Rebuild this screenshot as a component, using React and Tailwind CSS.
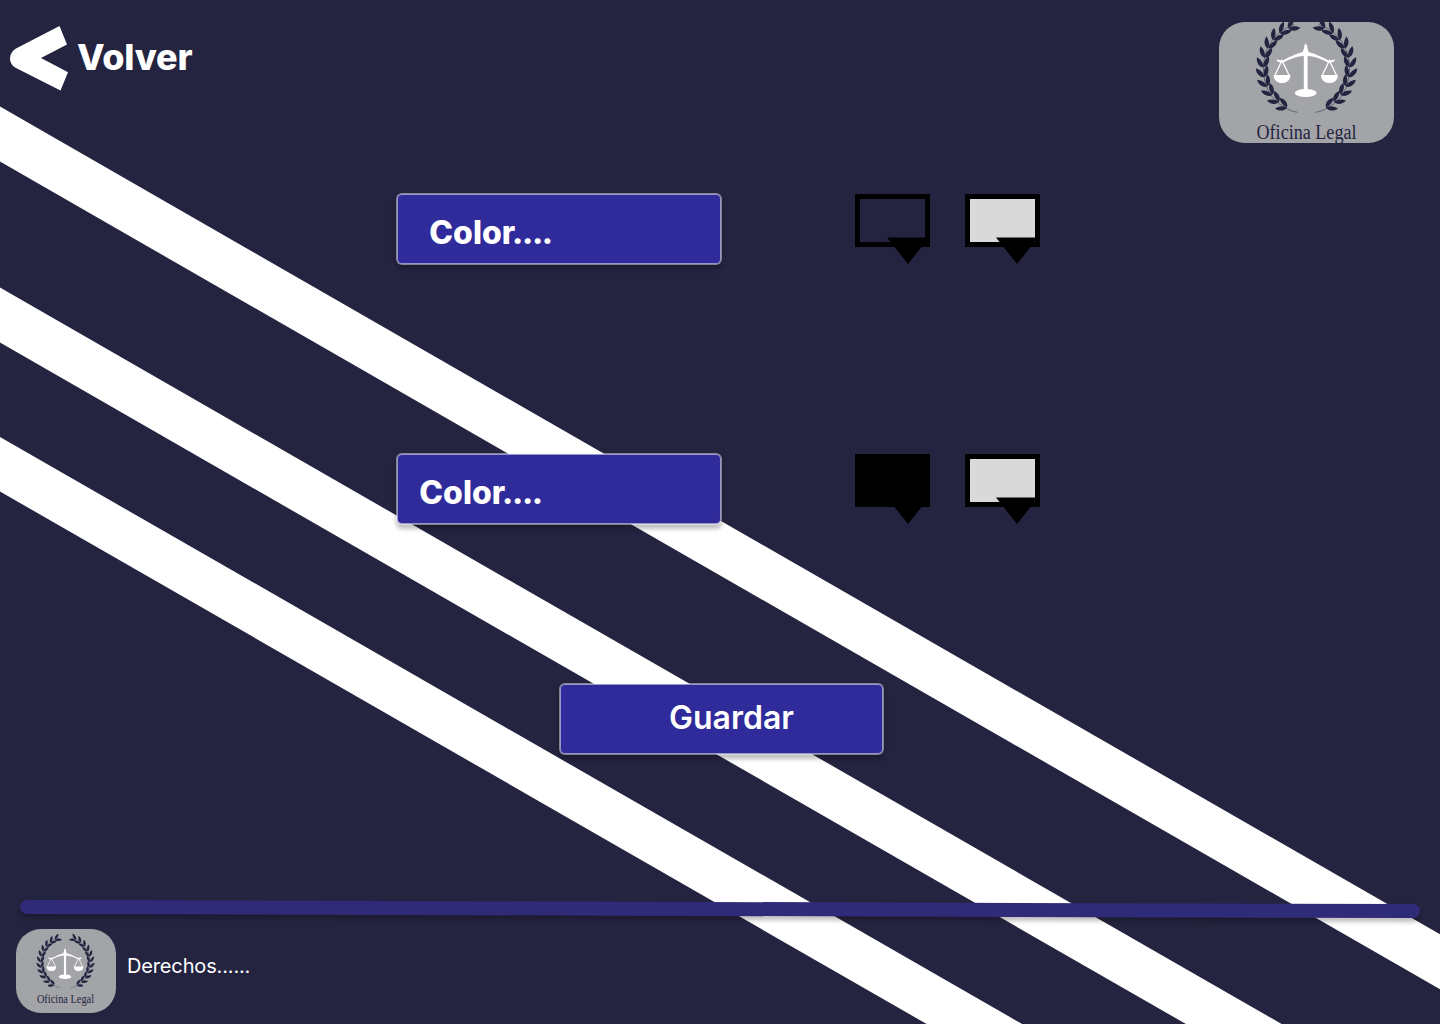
import React from "react";

const RAD = Math.PI / 180;

// Leaf pairs of the left laurel branch, from the stem up to the tip.
const LEAVES = Array.from({ length: 11 }, (_, i) => {
  const a = (-63 + i * 12.8) * RAD;
  const x = -43 * Math.cos(a);
  const y = 48 - 44 * Math.sin(a);
  const heading = Math.atan2(-44 * Math.cos(a), 43 * Math.sin(a)) / RAD;
  return { x, y, heading };
});

function Leaf({ turn, length }) {
  return (
    <path
      transform={`rotate(${turn}) scale(${length})`}
      d="M0 0C.15-.28 .7-.32 1 0C.75 .17 .3 .2 0 0Z"
    />
  );
}

function Branch() {
  return (
    <g fill="#252440">
      <path
        d="M-9 92.3C-14 91.5-18 90-22 87C-36 80-43 66-43 48C-43 30-34 12-12 4.5"
        fill="none"
        stroke="#252440"
        strokeWidth="0.5"
      />
      {LEAVES.map((l, i) => (
        <g key={i} transform={`translate(${l.x} ${l.y}) rotate(${l.heading})`}>
          <Leaf turn={-34} length={12} />
          <g transform="scale(1 -1)">
            <Leaf turn={-24} length={12} />
          </g>
        </g>
      ))}
    </g>
  );
}

function Emblem({ className }) {
  return (
    <svg viewBox="-51.5 0 104 128" className={`overflow-visible ${className}`} role="img" aria-label="Oficina Legal">
      <Branch />
      <g transform="scale(-1 1)">
        <Branch />
      </g>
      <g fill="#fff" transform="translate(-.8 0)">
        <path d="M-1.9 77V36C-10 36.5-17 39.5-23 43L-28 41.8L-29.5 39.5L-23 40.4C-17 37.5-9 33.5-3 32L-1.6 28V26L0 23.3L1.6 26V28L3 32C9 33.5 17 37.5 23 40.4L29.5 39.5L28 41.8L23 43C17 39.5 10 36.5 1.9 36V77Z" />
        <ellipse cx="0" cy="73" rx="11" ry="4" />
        {[-23.7, 23.7].map((x) => (
          <g key={x} transform={`translate(${x} 0)`}>
            <path d="M-7.4 56L0 40.5L7.4 56" fill="none" stroke="#fff" strokeWidth="1.3" />
            <path d="M-8.4 55H8.4C8.4 60.5 4.5 63 0 63S-8.4 60.5-8.4 55Z" />
          </g>
        ))}
      </g>
      <text
        x="-50"
        y="119"
        fontSize="20"
        textLength="100"
        lengthAdjust="spacingAndGlyphs"
        fill="#252440"
        className="font-['Liberation_Serif',serif]"
      >
        Oficina Legal
      </text>
    </svg>
  );
}

function Stripes() {
  return (
    <svg viewBox="0 0 1440 1024" className="absolute inset-0 -z-10 h-full w-full" fill="#fff" aria-hidden="true">
      <path d="M0 106.6L1440 934.2V989.2L0 161.6Z" />
      <path d="M0 287.6L1440 1115V1170L0 342.6Z" />
      <path d="M0 437L1440 1264V1319L0 491.5Z" />
    </svg>
  );
}

function Swatch({ fill, shift }) {
  return (
    <div className={`relative h-[53px] w-[75px] border-5 border-black ${fill}`}>
      <svg viewBox="0 0 42 27" className={`absolute top-[38px] h-[27px] w-[42px] ${shift}`}>
        <path d="M0 .6H42L21 27Z" fill="#000" />
      </svg>
    </div>
  );
}

const BOX =
  "h-[72px] rounded-[6px] border border-white/45 bg-[#302b9a] bg-clip-padding text-white shadow-[inset_0_0_0_1px_rgba(255,255,255,0.5),0_4px_4px_rgba(0,0,0,0.25)]";

function ColorRow({ pad, fill }) {
  return (
    <div className="flex h-[72px] pl-[396px]">
      <div className={`${BOX} w-[326px] shrink-0 pt-[19px] text-[32px] leading-[40px] font-extrabold ${pad}`}>
        Colo<span className="tracking-[-1.3px]">r....</span>
      </div>
      <div className="ml-[133px] flex gap-[35px] pt-px">
        <Swatch fill={fill} shift="left-[26.5px]" />
        <Swatch fill="bg-[#d9d9d9]" shift="left-[26px]" />
      </div>
    </div>
  );
}

export default function App() {
  return (
    <div className="relative isolate flex h-[1024px] w-[1440px] flex-col overflow-hidden bg-[#252440] font-[Inter,sans-serif] text-white">
      <Stripes />
      <header className="flex h-[193px] shrink-0 items-start justify-between pr-[46px] pl-[10px]">
        <button className="flex items-center pt-[26px]">
          <svg viewBox="0 0 58 65" className="h-[65px] w-[58px]" fill="#fff">
            <path d="M49.5 0L57 18.4L31 32L58 46.3L50.5 64.5L6 42C-2 38-2 27 6 22.5Z" />
          </svg>
          <span className="mb-[3px] ml-[9px] text-[36px] leading-[44px] font-extrabold tracking-[-0.2px]">
            Volver
          </span>
        </button>
        <div className="mt-[22px] flex h-[121px] w-[175px] justify-center overflow-hidden rounded-[26px] bg-[#a3a4a8]">
          <Emblem className="mt-[-2px] h-[128px] w-[104px] shrink-0" />
        </div>
      </header>

      <main className="flex h-[707px] shrink-0 flex-col">
        <ColorRow pad="pl-[32.3px]" fill="bg-transparent" />
        <div className="h-[188px]" />
        <ColorRow pad="pl-[22.3px]" fill="bg-black" />
        <button
          className={`${BOX} mt-[158px] ml-[559px] w-[325px] pb-[2px] pl-[20px] text-center text-[32px] leading-[40px] font-semibold`}
        >
          Guardar
        </button>
      </main>

      <footer className="px-[16px]">
        <div className="mx-[4px] mt-[2px] h-[14px] rotate-[0.17deg] rounded-full bg-[#302b78] shadow-[0_4px_4px_rgba(0,0,0,0.25)]" />
        <div className="mt-[13px] flex">
          <div className="flex h-[84px] w-[100px] justify-center overflow-hidden rounded-[25px] bg-[#a3a4a8]">
            <Emblem className="mt-[6px] h-[73.2px] w-[59.5px]" />
          </div>
          <p className="mt-[25px] ml-[11px] text-[20px] leading-[24px] tracking-[-0.15px]">Derechos......</p>
        </div>
      </footer>
    </div>
  );
}
